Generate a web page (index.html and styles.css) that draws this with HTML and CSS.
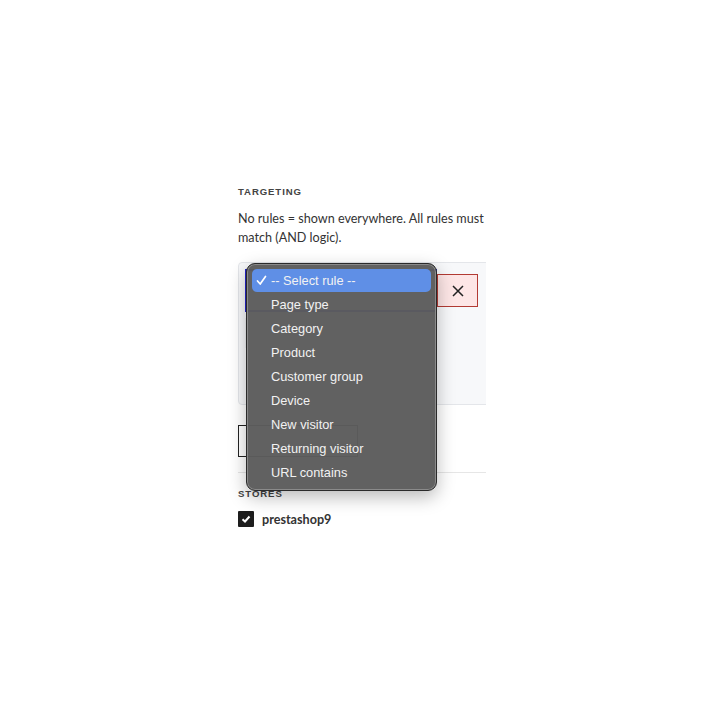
FILE: index.html
```html
<!DOCTYPE html>
<html>
<head>
<meta charset="utf-8">
<link rel="stylesheet" href="styles.css">
</head>
<body>
<div class="page">
  <div class="column">
    <h3 class="section-title">Targeting</h3>
    <p class="hint">No rules = shown everywhere. All rules must match (AND logic).</p>
    <div class="rule-panel">
      <div class="rule-row">
        <div class="select focused"></div>
        <button class="remove">
          <svg width="14" height="14" viewBox="0 0 14 14"><path d="M2 2 L12 12 M12 2 L2 12" stroke="#222" stroke-width="1.5" fill="none"/></svg>
        </button>
      </div>
      <div class="rule-row second">
        <div class="select ghost"><span class="chev"></span></div>
      </div>
    </div>
    <button class="add-rule"></button>
    <hr class="divider">
    <h3 class="section-title stores">Stores</h3>
    <label class="store">
      <span class="checkbox"><svg width="10" height="10" viewBox="0 0 10 10"><path d="M1.5 5.2 L4 7.5 L8.5 2.5" stroke="#fff" stroke-width="2" fill="none"/></svg></span>
      <span class="store-name">prestashop9</span>
    </label>

    <div class="menu">
      <div class="menu-item active"><svg class="tick" width="11" height="11" viewBox="0 0 11 11"><path d="M1.5 6 L4.2 9 L9.5 1.5" stroke="#fff" stroke-width="1.7" fill="none" stroke-linecap="round" stroke-linejoin="round"/></svg>-- Select rule --</div>
      <div class="menu-item">Page type</div>
      <div class="menu-item">Category</div>
      <div class="menu-item">Product</div>
      <div class="menu-item">Customer group</div>
      <div class="menu-item">Device</div>
      <div class="menu-item">New visitor</div>
      <div class="menu-item">Returning visitor</div>
      <div class="menu-item">URL contains</div>
    </div>
  </div>
</div>
</body>
</html>
```
FILE: styles.css
```css
* { box-sizing: border-box; }
html, body { margin: 0; padding: 0; background: #fff; }
body { font-family: "Lato", "Liberation Sans", sans-serif; color: #333; }
.page { padding: 186px 0 0 238px; }
.column { width: 248px; position: relative; }
.section-title {
  margin: 0; font-size: 9.6px; font-weight: 700; letter-spacing: 0.9px;
  text-transform: uppercase; color: #444; line-height: 11px;
  font-family: "Liberation Sans", sans-serif;
}
.hint { margin: 12px 0 0; font-size: 12.6px; line-height: 19px; color: #333; }
.rule-panel {
  margin-top: 15px; width: 280px; height: 143px;
  background: #f7f8fa; border: 1px solid #e4e6ea; border-radius: 4px;
  padding: 6px 6px;
  clip-path: inset(-2px 32px -2px -2px);
}
.rule-row { display: flex; align-items: center; }
.select { width: 192px; height: 43px; background: #fff; }
.select.focused { border: 2px solid #2323c8; }
.rule-row.second { margin-top: 6px; }
.select.ghost {
  height: 30px; background: transparent; border: 1px solid #eceef1;
}
.remove {
  width: 41px; height: 33px; background: #fde6e6; border: 1px solid #b23a33;
  display: flex; align-items: center; justify-content: center; padding: 0;
}
.add-rule {
  display: block; margin-top: 20px; height: 32px; width: 120px; background: #fff;
  border: 1px solid #222; padding: 0;
}
.divider { margin: 15px 0 0; border: 0; border-top: 1px solid #e6e6e6; }
.stores { margin-top: 15px; }
.store { display: flex; align-items: center; gap: 8px; margin-top: 12px; }
.checkbox {
  width: 16px; height: 16px; background: #1d1d1d; border-radius: 1px;
  display: flex; align-items: center; justify-content: center;
}
.store-name { font-size: 12.6px; font-weight: 700; color: #333; }

.menu {
  position: absolute; left: 8px; top: 77px; width: 191px; height: 228px;
  background: rgba(92,92,92,0.97);
  border: 1px solid #2a2a2a; border-radius: 9px;
  box-shadow: inset 0 0 0 1px #8a8a8a, 0 6px 18px rgba(0,0,0,0.28);
  padding: 5px 5px;
  font-family: "Liberation Sans", "Noto Sans", sans-serif;
}
.menu-item {
  height: 24px; line-height: 24px; padding-left: 19px; position: relative;
  font-size: 12.8px; color: #f2f2f2; border-radius: 5px;
}
.menu-item.active { background: #5f8fe6; height: 23px; line-height: 23px; margin-bottom: 1px; }
.tick { position: absolute; left: 4px; top: 6px; }
```
